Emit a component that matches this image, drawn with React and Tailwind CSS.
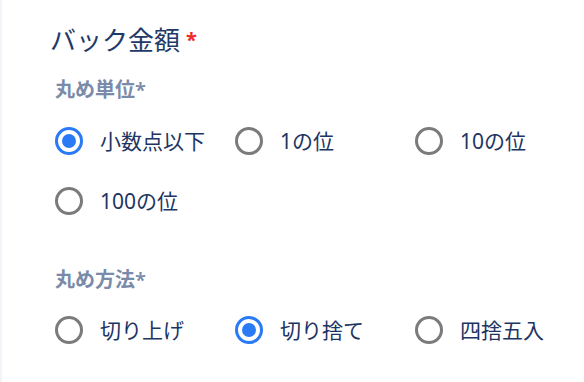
import React, { useState } from 'react';

const font = { fontFamily: '"Noto Sans", "Noto Sans CJK JP", sans-serif' };

function Radio({ label, checked, onSelect }) {
  return (
    <label className="flex h-[40px] cursor-pointer items-center gap-[17px]" onClick={onSelect}>
      <span
        className={
          checked
            ? 'flex h-[28px] w-[28px] shrink-0 items-center justify-center rounded-full border-[3px] border-[#2a7af5]'
            : 'flex h-[28px] w-[28px] shrink-0 items-center justify-center rounded-full border-[3px] border-[#7b7b7d]'
        }
      >
        {checked && <span className="h-[14px] w-[14px] rounded-full bg-[#2a7af5]" />}
      </span>
      <span className="text-[21px] leading-none text-[#1d3563]">{label}</span>
    </label>
  );
}

function RadioGroup({ options, value, onChange }) {
  return (
    <div className="grid grid-cols-[180px_180px_180px] gap-y-[20px] pl-[53px]">
      {options.map((opt) => (
        <Radio key={opt} label={opt} checked={value === opt} onSelect={() => onChange(opt)} />
      ))}
    </div>
  );
}

export default function App() {
  const [unit, setUnit] = useState('小数点以下');
  const [method, setMethod] = useState('切り捨て');

  return (
    <div className="h-[382px] w-[584px] overflow-hidden border-l-2 border-[#f3f3f9] bg-white" style={font}>
      <h2 className="mt-[24px] flex h-[32px] items-center pl-[48px] text-[26px] leading-[32px] text-[#1f3a69]">
        バック金額
        <span className="ml-[6px] text-[20px] font-bold text-[#f0282d]">*</span>
      </h2>

      <p className="mt-[20px] h-[28px] pl-[53px] text-[20px] font-semibold leading-[28px] text-[#7a8aa9]">丸め単位*</p>
      <div className="mt-[17px]">
        <RadioGroup options={['小数点以下', '1の位', '10の位', '100の位']} value={unit} onChange={setUnit} />
      </div>

      <p className="mt-[45px] h-[28px] pl-[53px] text-[20px] font-semibold leading-[28px] text-[#7a8aa9]">丸め方法*</p>
      <div className="mt-[16px]">
        <RadioGroup options={['切り上げ', '切り捨て', '四捨五入']} value={method} onChange={setMethod} />
      </div>
    </div>
  );
}
